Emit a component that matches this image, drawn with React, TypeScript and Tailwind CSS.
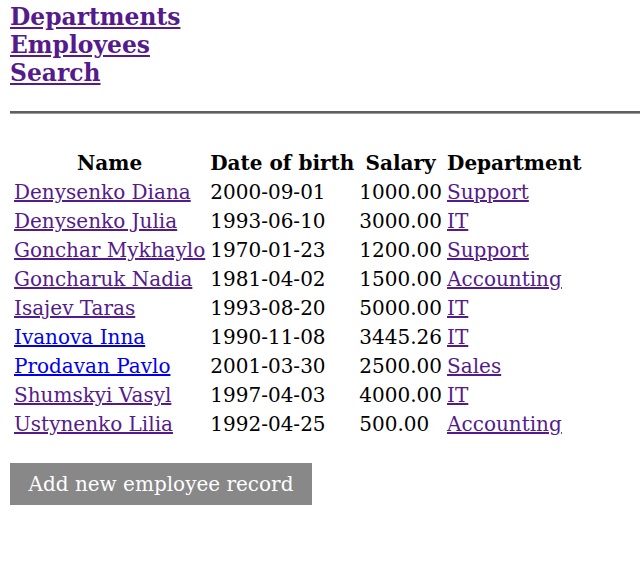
const employees = [
  { name: "Denysenko Diana", dob: "2000-09-01", salary: "1000.00", dept: "Support", visited: true },
  { name: "Denysenko Julia", dob: "1993-06-10", salary: "3000.00", dept: "IT", visited: true },
  { name: "Gonchar Mykhaylo", dob: "1970-01-23", salary: "1200.00", dept: "Support", visited: true },
  { name: "Goncharuk Nadia", dob: "1981-04-02", salary: "1500.00", dept: "Accounting", visited: true },
  { name: "Isajev Taras", dob: "1993-08-20", salary: "5000.00", dept: "IT", visited: true },
  { name: "Ivanova Inna", dob: "1990-11-08", salary: "3445.26", dept: "IT", visited: false },
  { name: "Prodavan Pavlo", dob: "2001-03-30", salary: "2500.00", dept: "Sales", visited: false },
  { name: "Shumskyi Vasyl", dob: "1997-04-03", salary: "4000.00", dept: "IT", visited: true },
  { name: "Ustynenko Lilia", dob: "1992-04-25", salary: "500.00", dept: "Accounting", visited: true },
];

const App = () => {
  return (
    <div className="pl-[10px] pt-[3px] font-['DejaVu_Serif',serif] text-black">
      <nav className="flex flex-col items-start text-[23.4px] font-bold leading-[28px]">
        <a href="#" className="underline text-[#551a8b]">Departments</a>
        <a href="#" className="underline text-[#551a8b]">Employees</a>
        <a href="#" className="underline text-[#551a8b]">Search</a>
      </nav>
      <div className="mt-[24px] h-[3px] border-t-2 border-b border-t-[#5f5f5f] border-b-[#9a9a9a]" />
      <table className="mt-[34px] border-separate border-spacing-x-[3px] border-spacing-y-[2px] text-[20px]">
        <thead>
          <tr>
            <th className="px-[1px] py-[1px] text-center font-bold leading-[25px]">Name</th>
            <th className="px-[1px] py-[1px] text-center font-bold leading-[25px]">Date of birth</th>
            <th className="px-[1px] py-[1px] text-center font-bold leading-[25px]">Salary</th>
            <th className="px-[1px] py-[1px] text-center font-bold leading-[25px]">Department</th>
          </tr>
        </thead>
        <tbody>
          {employees.map((e) => (
            <tr key={e.name}>
              <td className="px-[1px] py-[1px] leading-[25px]">
                <a href="#" className={e.visited ? "underline text-[#551a8b]" : "underline text-[#0000ee]"}>{e.name}</a>
              </td>
              <td className="px-[1px] py-[1px] leading-[25px]">{e.dob}</td>
              <td className="px-[1px] py-[1px] leading-[25px]">{e.salary}</td>
              <td className="px-[1px] py-[1px] leading-[25px]">
                <a href="#" className="underline text-[#551a8b]">{e.dept}</a>
              </td>
            </tr>
          ))}
        </tbody>
      </table>
      <button className="mt-[23px] h-[42px] bg-[#888888] px-[18.5px] text-[20px] text-white">
        Add new employee record
      </button>
    </div>
  );
};

export default App;
